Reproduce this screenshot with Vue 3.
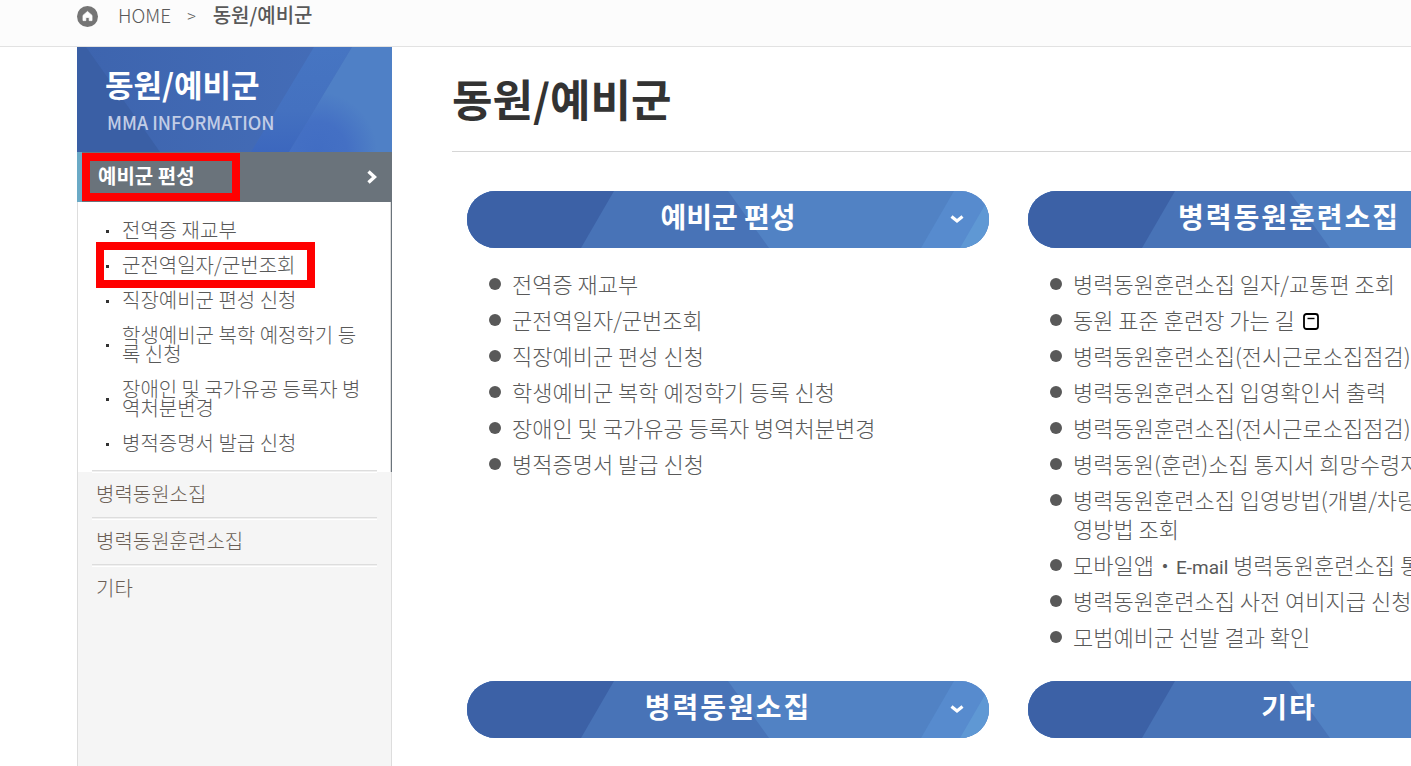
<script setup>
const submenu = [
  { text: '전역증 재교부' },
  { text: '군전역일자/군번조회', marked: true },
  { text: '직장예비군 편성 신청' },
  { text: '학생예비군 복학 예정학기 등록 신청' },
  { text: '장애인 및 국가유공 등록자 병역처분변경' },
  { text: '병적증명서 발급 신청' }
]
const menu = ['병력동원소집', '병력동원훈련소집', '기타']
const plain = (text) => ({ parts: [{ text }] })
const cards = [
  {
    title: '예비군 편성',
    items: submenu.map((s) => plain(s.text))
  },
  {
    title: '병력동원훈련소집',
    spaced: true,
    items: [
      plain('병력동원훈련소집 일자/교통편 조회'),
      { ...plain('동원 표준 훈련장 가는 길'), popup: true },
      plain('병력동원훈련소집(전시근로소집점검)'),
      plain('병력동원훈련소집 입영확인서 출력'),
      plain('병력동원훈련소집(전시근로소집점검)'),
      plain('병력동원(훈련)소집 통지서 희망수령자'),
      { parts: [{ text: '병력동원훈련소집 입영방법(개별/차량' }, { text: '영방법 조회', br: true }] },
      { parts: [{ text: '모바일앱・' }, { text: 'E-mail', latin: true }, { text: ' 병력동원훈련소집 통' }] },
      plain('병력동원훈련소집 사전 여비지급 신청'),
      plain('모범예비군 선발 결과 확인')
    ]
  },
  { title: '병력동원소집', spaced: true, items: [] },
  { title: '기타', spaced: true, items: [] }
]
</script>

<template>
  <div class="page">
    <nav class="crumbs" aria-label="breadcrumb">
      <svg class="home" viewBox="0 0 21 21" aria-hidden="true">
        <circle cx="10.5" cy="10.5" r="10.5" fill="#757575" />
        <path d="M10.5 5.4 L15 9.4 V14.6 H12.2 V11.4 H8.8 V14.6 H6 V9.4 Z" fill="#fff" stroke="#fff" stroke-width="0.8" stroke-linejoin="round" />
      </svg>
      <a href="#">HOME</a>
      <span class="sep">&gt;</span>
      <strong>동원/예비군</strong>
    </nav>

    <div class="body">
      <aside class="side">
        <header class="side-head">
          <svg class="art" viewBox="0 0 315 105" preserveAspectRatio="none" aria-hidden="true">
            <defs>
              <linearGradient id="sideBase" x1="0" x2="1">
                <stop offset="0" stop-color="#3d64ae" />
                <stop offset="1" stop-color="#466fba" />
              </linearGradient>
              <linearGradient id="sideBand" x1="0" x2="0" y1="0" y2="1">
                <stop offset="0" stop-color="#4675c2" />
                <stop offset="0.6" stop-color="#4471c0" />
                <stop offset="1" stop-color="#3c67be" />
              </linearGradient>
              <radialGradient id="sideShade" gradientUnits="userSpaceOnUse" cx="240" cy="105" r="60">
                <stop offset="0" stop-color="#416dc3" />
                <stop offset="0.5" stop-color="#4470c4" />
                <stop offset="1" stop-color="#4f80c6" />
              </radialGradient>
            </defs>
            <rect width="315" height="105" fill="url(#sideBase)" />
            <path d="M0 0 H9 L83 105 H0 Z" fill="#3a5fa5" />
            <path d="M237 0 H275 L212 105 H174 Z" fill="url(#sideBand)" />
            <path d="M275 0 H315 V105 H212 Z" fill="url(#sideShade)" />
          </svg>
          <h2>동원/예비군</h2>
          <p>MMA INFORMATION</p>
        </header>

        <a class="current" href="#">
          <span>예비군 편성</span>
          <svg viewBox="0 0 10 14" aria-hidden="true">
            <path d="M1.5 1.5 L7.5 7 L1.5 12.5" fill="none" stroke="#fff" stroke-width="3.4" />
          </svg>
          <i class="mark mark-current"></i>
        </a>

        <ul class="submenu">
          <li v-for="s in submenu" :key="s.text">
            <a href="#">{{ s.text }}</a>
            <i v-if="s.marked" class="mark mark-item"></i>
          </li>
        </ul>

        <ul class="menu">
          <li v-for="m in menu" :key="m"><a href="#">{{ m }}</a></li>
        </ul>
      </aside>

      <main class="main">
        <h1>동원/예비군</h1>
        <div class="cards">
          <section v-for="c in cards" :key="c.title" class="card">
            <a class="pill" :class="{ spaced: c.spaced }" href="#">
              <svg class="art" viewBox="0 0 522 57" preserveAspectRatio="none" aria-hidden="true">
                <rect width="522" height="57" fill="#5182c4" />
                <path d="M0 0 H261 L302 57 H0 Z" fill="#4873b7" />
                <path d="M0 0 H147 L114 57 H0 Z" fill="#3c61a6" />
                <path d="M487 0 H522 V57 H454 Z" fill="#578bce" />
                <path d="M526 0 V57 H493 Z" fill="#5f98d4" />
              </svg>
              <span>{{ c.title }}</span>
              <svg class="down" viewBox="0 0 14 9" aria-hidden="true">
                <path d="M1.5 1.5 L7 6 L12.5 1.5" fill="none" stroke="#fff" stroke-width="3.2" />
              </svg>
            </a>
            <ul v-if="c.items.length" class="links">
              <li v-for="(item, i) in c.items" :key="i">
                <a href="#"><template v-for="(p, n) in item.parts" :key="n"><br v-if="p.br"><span :class="{ latin: p.latin }">{{ p.text }}</span></template><svg v-if="item.popup" class="popup" viewBox="0 0 16 17" aria-hidden="true">
                  <rect x="1" y="1" width="14" height="15" rx="2.5" fill="#fff" stroke="#000" stroke-width="1.8" />
                  <path d="M4.5 5.5 H11.5" stroke="#000" stroke-width="1.4" />
                </svg></a>
              </li>
            </ul>
          </section>
        </div>
      </main>
    </div>
  </div>
</template>

<style>
body {
  background: #fff;
}
</style>

<style scoped>
.page {
  display: flex;
  flex-direction: column;
  height: 100vh;
  overflow: hidden;
  font-family: "Noto Sans CJK KR", sans-serif;
  color: #595959;
}
.page * {
  box-sizing: border-box;
}
a {
  color: inherit;
  text-decoration: none;
}
h1, h2, p, ul {
  margin: 0;
  padding: 0;
}
ul {
  list-style: none;
}
.crumbs {
  display: flex;
  flex: none;
  align-items: center;
  height: 47px;
  padding: 0 0 14px 77px;
  border-bottom: 1px solid #e2e2e2;
  background: #fcfcfc;
  font-size: 19px;
  font-weight: 300;
  line-height: 30px;
}
.crumbs > * {
  padding-bottom: 2px;
}
.crumbs .home {
  width: 21px;
  height: 21px;
  margin: 1px 20px 0 0;
  padding: 0;
}
.sep {
  margin: 0 17px 0 16px;
  font-size: 16px;
}
.crumbs strong {
  font-size: 20px;
  font-weight: 500;
}
.body {
  display: flex;
  flex: 1;
  min-height: 0;
  padding-left: 77px;
}
.side {
  display: flex;
  flex: none;
  flex-direction: column;
  width: 315px;
}
.side-head {
  position: relative;
  height: 105px;
  padding: 14px 28px 0;
  color: #fff;
}
.art {
  position: absolute;
  inset: 0;
  width: 100%;
  height: 100%;
}
.side-head h2,
.side-head p {
  position: relative;
}
.side-head h2 {
  font-size: 31px;
  font-weight: 700;
  line-height: 46px;
}
.side-head p {
  padding-left: 2px;
  color: #c2cde6;
  font-size: 18px;
  font-weight: 500;
  line-height: 31px;
}
.current {
  position: relative;
  display: flex;
  align-items: center;
  justify-content: space-between;
  height: 50px;
  padding: 0 15px 0 16px;
  border-left: 5px solid #6baac6;
  background: #6a737b;
  color: #fff;
  font-size: 20px;
  font-weight: 700;
}
.current span {
  padding-bottom: 4px;
}
.current svg {
  width: 10px;
  height: 14px;
}
.mark {
  position: absolute;
  border: 8px solid #f00;
}
.mark-current {
  inset: 1px 152px 1px 0;
}
.submenu {
  padding: 10px 20px 0 28px;
  height: 270px;
  border-left: 1px solid #ddd;
  border-right: 1px solid #6a737b;
  box-shadow: inset -1px 0 #ddd;
  font-size: 20px;
  font-weight: 300;
  line-height: 19px;
}
.submenu li {
  position: relative;
  padding: 8px 0 8px 16px;
}
.submenu li::before {
  position: absolute;
  top: 50%;
  left: 0;
  width: 3px;
  height: 3px;
  background: #333;
  content: "";
}
.mark-item {
  inset: -5px 56px -6px -10px;
}
.menu {
  flex: 1;
  padding: 0 14px;
  border: 1px solid #ddd;
  border-width: 0 1px;
  background: #f5f5f5;
  font-size: 20px;
  font-weight: 300;
  color: #6b5f55;
}
.menu li {
  position: relative;
  height: 47px;
  padding-left: 4px;
  line-height: 43px;
}
.menu li::before {
  position: absolute;
  top: -2px;
  left: 0;
  right: 0;
  height: 1px;
  border-top: 1px solid #ddd;
  border-bottom: 1px solid #fff;
  background: #f0f0f0;
  content: "";
}
.main {
  flex: 1;
  min-width: 0;
  padding-left: 60px;
  overflow: hidden;
}
h1 {
  height: 105px;
  border-bottom: 1px solid #d6d6d6;
  color: #333;
  font-size: 44px;
  font-weight: 700;
  line-height: 102px;
}
.cards {
  display: grid;
  grid-template-columns: repeat(2, minmax(522px, 1fr));
  gap: 23px 39px;
  padding: 39px 0 0 15px;
}
.pill {
  position: relative;
  display: flex;
  justify-content: center;
  height: 57px;
  overflow: hidden;
  border-radius: 29px;
  color: #fff;
  font-size: 28px;
  font-weight: 700;
  line-height: 50px;
}
.pill span {
  position: relative;
}
.pill.spaced {
  letter-spacing: 2px;
}
.down {
  position: absolute;
  top: 24px;
  right: 25px;
  width: 14px;
  height: 9px;
}
.links {
  padding: 21px 0 0 22px;
  font-size: 22px;
  font-weight: 300;
  line-height: 29px;
  white-space: nowrap;
}
.links li {
  position: relative;
  min-height: 36px;
  padding: 0 0 7px 23px;
}
.links li::before {
  position: absolute;
  top: 9px;
  left: 0;
  width: 12px;
  height: 12px;
  border-radius: 50%;
  background: #595959;
  content: "";
}
.latin {
  font-family: Roboto, sans-serif;
  font-size: 19px;
  font-weight: 400;
  line-height: 20px;
}
.popup {
  width: 16px;
  height: 17px;
  margin-left: 8px;
  vertical-align: -1px;
}
</style>
